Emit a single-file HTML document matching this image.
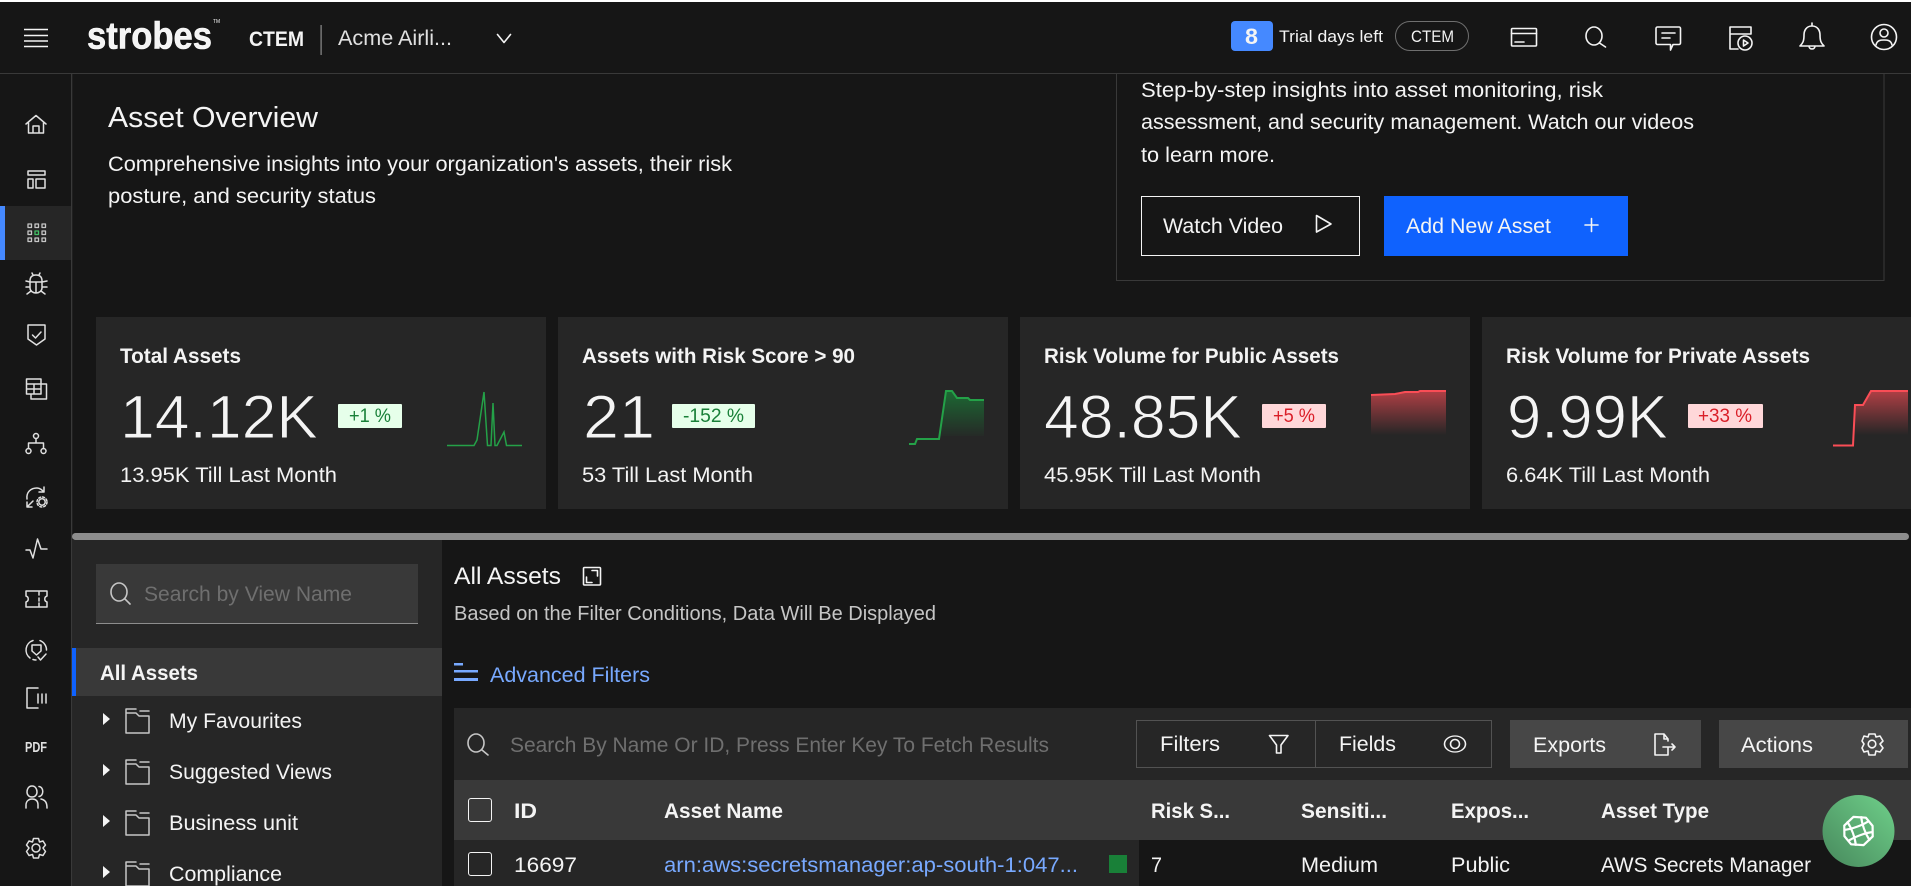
<!DOCTYPE html>
<html lang="en"><head><meta charset="utf-8"><title>Asset Overview</title>
<style>
html,body{margin:0;padding:0;background:#161616;width:1911px;height:886px;overflow:hidden}
svg{display:block}
text{font-family:"Liberation Sans",sans-serif;fill:#f4f4f4;font-size:21px;white-space:pre}
.b{font-weight:700}
.v{font-size:61px;stroke:#262626;stroke-width:1}
.ic{fill:none;stroke:#f4f4f4;stroke-width:1.6;stroke-linecap:round;stroke-linejoin:round}
.si{fill:none;stroke:#e0e0e0;stroke-width:1.5;stroke-linecap:round;stroke-linejoin:round}
</style></head><body>
<svg xmlns="http://www.w3.org/2000/svg" width="1911" height="886" viewBox="0 0 1911 886">
<defs>
<linearGradient id="g" x1="0" y1="0" x2="0" y2="1"><stop offset="0" stop-color="#198038" stop-opacity=".75"/><stop offset="1" stop-color="#198038" stop-opacity="0"/></linearGradient>
<linearGradient id="r" x1="0" y1="0" x2="0" y2="1"><stop offset="0" stop-color="#fa4d56" stop-opacity=".65"/><stop offset="1" stop-color="#fa4d56" stop-opacity="0"/></linearGradient>
<linearGradient id="fab" x1="1" y1="0" x2="0" y2="1"><stop offset="0" stop-color="#6fd08a"/><stop offset="1" stop-color="#47885c"/></linearGradient>
</defs>
<rect width="1911" height="886" fill="#161616"/>
<rect width="1911" height="2" fill="#fff"/>
<rect y="73" width="1911" height="1" fill="#393939"/>

<!-- header -->
<g stroke="#f4f4f4" stroke-width="1.4"><path d="M24 29.5H48M24 35.5H48M24 41H48M24 46.5H48"/></g>
<text x="87" y="48.500" class="b" style="font-size:38px;stroke:#fff;stroke-width:.6" textLength="125" lengthAdjust="spacingAndGlyphs">strobes</text>
<text x="213" y="23" style="font-size:5px" textLength="7" lengthAdjust="spacingAndGlyphs">TM</text>
<text x="249" y="46" class="b" style="font-size:21px" textLength="55" lengthAdjust="spacingAndGlyphs">CTEM</text>
<rect x="320.5" y="25" width="1.2" height="30" fill="#8d8d8d"/>
<text x="338" y="45" style="font-size:21px;fill:#e0e0e0" textLength="114" lengthAdjust="spacingAndGlyphs">Acme Airli...</text>
<path class="ic" d="M497.5 34.5L504 42.5L510.5 34.5"/>

<rect x="1231" y="21" width="42" height="30" rx="4" fill="#4589ff"/>
<text x="1245" y="44" class="b" style="font-size:22px" textLength="13" lengthAdjust="spacingAndGlyphs">8</text>
<text x="1279" y="42" style="font-size:17px" textLength="104" lengthAdjust="spacingAndGlyphs">Trial days left</text>
<rect x="1395.5" y="21.5" width="73" height="29" rx="14.5" fill="none" stroke="#6f6f6f"/>
<text x="1411" y="42" style="font-size:17px" textLength="43" lengthAdjust="spacingAndGlyphs">CTEM</text>

<!-- top icons -->
<g class="ic">
<rect x="1511.5" y="28.5" width="25" height="17.5" rx="1"/><path d="M1511.5 33.5H1536.5M1515 42H1524" stroke-width="1.6"/>
<ellipse cx="1594" cy="36" rx="8" ry="9"/><path d="M1599.5 43L1605.5 47"/>
<path d="M1657.5 27H1679a1.5 1.5 0 0 1 1.5 1.5V43a1.5 1.5 0 0 1-1.5 1.5H1673L1670.5 50V44.5H1657.5a1.5 1.5 0 0 1-1.5-1.5V28.5a1.5 1.5 0 0 1 1.5-1.5zM1662 33H1675M1662 38H1670"/>
<path d="M1730 34V27H1751V34H1730M1730 34V49H1738"/><circle cx="1745" cy="43" r="7"/><path d="M1743.5 40L1748 43L1743.5 46Z"/>
<path d="M1812 23V26M1812 26C1806 26 1804 31 1804 35C1804 41 1803 43 1800 46H1824C1821 43 1820 41 1820 35C1820 31 1818 26 1812 26ZM1809 46C1809 50 1815 50 1815 46"/>
<circle cx="1884" cy="37" r="12.5"/><circle cx="1884" cy="33" r="4"/><path d="M1876 45C1877 40 1881 40 1884 40C1887 40 1891 40 1892 45"/>
</g>

<!-- sidebar -->
<rect x="71" y="74" width="1.3" height="812" fill="#393939"/>
<rect x="0" y="206" width="71" height="54" fill="#262626"/>
<rect x="0" y="206" width="5" height="54" fill="#4589ff"/>
<g class="si">
<path d="M26 124L36 115.500L46 124M28.500 122V133H43.500V122M33 133V126H39V133"/>
<path d="M28 171H45V175H28ZM28 179H33V188H28ZM36 179H45V188H36Z"/>
<g stroke-width="1.3" stroke="#c6c6c6"><rect x="28" y="224" width="3.500" height="3.500"/><rect x="35" y="224" width="3.500" height="3.500"/><rect x="42" y="224" width="3.500" height="3.500"/><rect x="28" y="231" width="3.500" height="3.500"/><rect x="35" y="231" width="3.500" height="3.500" stroke="#42be65"/><rect x="42" y="231" width="3.500" height="3.500"/><rect x="28" y="238" width="3.500" height="3.500"/><rect x="35" y="238" width="3.500" height="3.500"/><rect x="42" y="238" width="3.500" height="3.500"/></g>
<path d="M30 281C30 276 33 275 36 275C39 275 42 276 42 281V288C42 291 39 293 36 293C33 293 30 291 30 288ZM30 282H42M36 282V293M33 275L32 273M39 275L40 273M30 282L26 281M42 282L47 281M30 287H26M42 287H47M31 291L27 294M41 291L45 294"/>
<path d="M28 325H45V339L36.500 345L28 339ZM32.500 335L35.500 338L41 332"/>
<path d="M26.500 379H41V394H26.500ZM26.500 384H41M26.500 389H41M34 384V394M41 384H46.500V399H31V394"/>
<circle cx="36" cy="436" r="2.500"/><circle cx="28.500" cy="451" r="2.500"/><circle cx="43.500" cy="451" r="2.500"/><path d="M36 438.500V443M28.500 448.500V443H43.500V448.500"/>
<path d="M27 499C26 492 31 488 37 488C40 488 42 490 44 492M44 487V492H39M27 507L33 501M27 502V507H32"/><circle cx="42" cy="502" r="3.200"/><circle cx="42" cy="502" r="5" stroke-dasharray="2 2"/>
<path d="M26 550L30 550L33 558L37.500 539L41 549L47 549"/>
<path d="M26 591H47V596C44 597 44 601 47 602V607H26V602C29 601 29 597 26 596ZM39 592V595M39 598V601M39 603V606"/>
<path d="M30 658A10 10 0 0 1 33 640.500M40 640.600A10 10 0 0 1 46.500 650M33 659.500A10 10 0 0 0 36 660M32 645H41V651L36.500 655L32 651ZM38 657L40.500 660L46 654"/>
<path d="M38 688H27V708H38M38 694V703M42 694V703M46 694V703"/>
<path d="M32 786C28 786 27 790 27 792C27 795 29 797 32 797C35 797 37 795 37 792C37 790 36 786 32 786ZM26 808V805C26 801 29 799 32 799C36 799 38 801 38 805V808M39 786.500C44 787 44 796 39 796.500M41 799C45 800 47 802 47 808"/>
<path d="M33.500 838.500H38.500L39.500 842L43 841L45.500 845L43 848L45.500 851.500L43 855.500L39.500 854.500L38.500 858H33.500L32.500 854.500L29 855.500L26.500 851.500L29 848L26.500 845L29 841L32.500 842Z"/><circle cx="36" cy="848" r="4"/>
</g>
<text x="25" y="752" class="b" style="font-size:15px;fill:#e0e0e0" textLength="22" lengthAdjust="spacingAndGlyphs">PDF</text>

<!-- hero -->
<text x="108" y="127" style="font-size:29px" textLength="210" lengthAdjust="spacingAndGlyphs">Asset Overview</text>
<text x="108" y="171" textLength="624" lengthAdjust="spacingAndGlyphs">Comprehensive insights into your organization's assets, their risk</text>
<text x="108" y="203" textLength="268" lengthAdjust="spacingAndGlyphs">posture, and security status</text>

<path d="M1116.500 74V280.500H1884V74" fill="none" stroke="#393939"/>
<text x="1141" y="97" textLength="462" lengthAdjust="spacingAndGlyphs">Step-by-step insights into asset monitoring, risk</text>
<text x="1141" y="129" textLength="553" lengthAdjust="spacingAndGlyphs">assessment, and security management. Watch our videos</text>
<text x="1141" y="162" textLength="134" lengthAdjust="spacingAndGlyphs">to learn more.</text>
<rect x="1141.500" y="196.500" width="218" height="59" fill="none" stroke="#f4f4f4"/>
<text x="1163" y="233" textLength="120" lengthAdjust="spacingAndGlyphs">Watch Video</text>
<path class="ic" d="M1316.500 215.500L1331 224L1316.500 232Z"/>
<rect x="1384" y="196" width="244" height="60" fill="#0f62fe"/>
<text x="1406" y="233" textLength="145" lengthAdjust="spacingAndGlyphs">Add New Asset</text>
<path class="ic" d="M1591.500 218.500V231.500M1585 225H1598"/>

<!-- cards -->
<g fill="#262626"><rect x="96" y="317" width="450" height="192"/><rect x="558" y="317" width="450" height="192"/><rect x="1020" y="317" width="450" height="192"/><rect x="1482" y="317" width="429" height="192"/></g>

<text x="120" y="363" class="b" textLength="121" lengthAdjust="spacingAndGlyphs">Total Assets</text>
<text x="120" y="438" class="v" textLength="198" lengthAdjust="spacingAndGlyphs">14.12K</text>
<rect x="338" y="404" width="64" height="24" rx="1" fill="#e6ffea"/>
<text x="349" y="422" style="font-size:19px;fill:#198038" textLength="42" lengthAdjust="spacingAndGlyphs">+1 %</text>
<text x="120" y="482" textLength="217" lengthAdjust="spacingAndGlyphs">13.95K Till Last Month</text>
<path d="M447 445.500H474L477 440L484 392L487.500 445.500H491L493 403L495 445.500H497L504 432L506.500 445.500H522" fill="none" stroke="#24a148" stroke-width="1.500"/>

<text x="582" y="363" class="b" textLength="273" lengthAdjust="spacingAndGlyphs">Assets with Risk Score &gt; 90</text>
<text x="583" y="438" class="v" textLength="72" lengthAdjust="spacingAndGlyphs">21</text>
<rect x="672" y="404" width="83" height="24" rx="1" fill="#e6ffea"/>
<text x="683" y="422" style="font-size:19px;fill:#198038" textLength="61" lengthAdjust="spacingAndGlyphs">-152 %</text>
<text x="582" y="482" textLength="171" lengthAdjust="spacingAndGlyphs">53 Till Last Month</text>
<path d="M939 439L946 391H952L957 398H968L970 400H984V436H939Z" fill="url(#g)"/>
<path d="M909 444H915L917 439H939L946 391H952L957 398H968L970 400H984" fill="none" stroke="#24a148" stroke-width="2"/>

<text x="1044" y="363" class="b" textLength="295" lengthAdjust="spacingAndGlyphs">Risk Volume for Public Assets</text>
<text x="1044" y="438" class="v" textLength="198" lengthAdjust="spacingAndGlyphs">48.85K</text>
<rect x="1262" y="404" width="64" height="24" rx="1" fill="#ffd7d9"/>
<text x="1273" y="422" style="font-size:19px;fill:#da1e28" textLength="42" lengthAdjust="spacingAndGlyphs">+5 %</text>
<text x="1044" y="482" textLength="217" lengthAdjust="spacingAndGlyphs">45.95K Till Last Month</text>
<path d="M1371 395L1395 394L1405 392H1418L1420 391H1446V435H1371Z" fill="url(#r)"/>
<path d="M1371 395L1395 394L1405 392H1418L1420 391H1446" fill="none" stroke="#fa4d56" stroke-width="2"/>

<text x="1506" y="363" class="b" textLength="304" lengthAdjust="spacingAndGlyphs">Risk Volume for Private Assets</text>
<text x="1507" y="438" class="v" textLength="161" lengthAdjust="spacingAndGlyphs">9.99K</text>
<rect x="1688" y="404" width="75" height="24" rx="1" fill="#ffd7d9"/>
<text x="1698" y="422" style="font-size:19px;fill:#da1e28" textLength="54" lengthAdjust="spacingAndGlyphs">+33 %</text>
<text x="1506" y="482" textLength="204" lengthAdjust="spacingAndGlyphs">6.64K Till Last Month</text>
<path d="M1854 405H1863L1871 391H1908V435H1854Z" fill="url(#r)"/>
<path d="M1833 445.500H1853L1855 405H1863L1871 391H1908" fill="none" stroke="#fa4d56" stroke-width="2"/>

<!-- splitter -->
<rect x="72" y="533" width="1837" height="7" rx="3.500" fill="#8d8d8d"/>

<!-- left panel -->
<rect x="72.300" y="540" width="369.700" height="346" fill="#262626"/>
<rect x="96" y="564" width="322" height="59" fill="#393939"/>
<rect x="96" y="623" width="322" height="1" fill="#8d8d8d"/>
<ellipse cx="119" cy="592" rx="8" ry="9" class="ic" style="stroke:#c6c6c6"/><path class="ic" d="M125 599L130 604" style="stroke:#c6c6c6"/>
<text x="144" y="601" style="fill:#6f6f6f" textLength="208" lengthAdjust="spacingAndGlyphs">Search by View Name</text>
<rect x="72.300" y="648" width="369.700" height="48" fill="#393939"/>
<rect x="72" y="648" width="4" height="48" fill="#0f62fe"/>
<text x="100" y="680" class="b" textLength="98" lengthAdjust="spacingAndGlyphs">All Assets</text>
<g fill="#f4f4f4"><path d="M103 713L110 719L103 725Z"/><path d="M103 764L110 770L103 776Z"/><path d="M103 815L110 821L103 827Z"/><path d="M103 866L110 872L103 878Z"/></g>
<g class="si" style="stroke:#c6c6c6"><path d="M126 709H136M126 709V733H149V716H139L136 713H126M140 711H149"/><path d="M126 760H136M126 760V784H149V767H139L136 764H126M140 762H149"/><path d="M126 811H136M126 811V835H149V818H139L136 815H126M140 813H149"/><path d="M126 862H136M126 862V886H149V869H139L136 866H126M140 864H149"/></g>
<text x="169" y="728" textLength="133" lengthAdjust="spacingAndGlyphs">My Favourites</text>
<text x="169" y="779" textLength="163" lengthAdjust="spacingAndGlyphs">Suggested Views</text>
<text x="169" y="830" textLength="129" lengthAdjust="spacingAndGlyphs">Business unit</text>
<text x="169" y="881" textLength="113" lengthAdjust="spacingAndGlyphs">Compliance</text>

<!-- right section -->
<text x="454" y="584" style="font-size:24px" textLength="107" lengthAdjust="spacingAndGlyphs">All Assets</text>
<rect x="583.500" y="567.500" width="17" height="17.500" class="ic" rx="1"/><path class="ic" stroke-width="1.200" d="M592 570.500H597.500V576M586.500 577V582.500H592"/>
<text x="454" y="620" style="font-size:20px;fill:#c6c6c6" textLength="482" lengthAdjust="spacingAndGlyphs">Based on the Filter Conditions, Data Will Be Displayed</text>
<g fill="#78a9ff"><rect x="454" y="663" width="9" height="2.500"/><rect x="454" y="670" width="24" height="2.500"/><rect x="454" y="678" width="24" height="3"/></g>
<text x="490" y="682" style="fill:#78a9ff" textLength="160" lengthAdjust="spacingAndGlyphs">Advanced Filters</text>

<rect x="454" y="708" width="1457" height="72" fill="#262626"/>
<ellipse cx="476" cy="743" rx="8" ry="9" class="ic" style="stroke:#c6c6c6"/><path class="ic" d="M482 750L488 755" style="stroke:#c6c6c6"/>
<text x="510" y="752" style="fill:#6f6f6f" textLength="539" lengthAdjust="spacingAndGlyphs">Search By Name Or ID, Press Enter Key To Fetch Results</text>
<rect x="1136.500" y="720.500" width="355" height="47" fill="none" stroke="#525252"/>
<rect x="1315" y="720" width="1" height="48" fill="#525252"/>
<text x="1160" y="751" textLength="60" lengthAdjust="spacingAndGlyphs">Filters</text>
<path class="ic" d="M1269.500 735.500H1288L1281 745V753H1276.500V745Z"/>
<text x="1339" y="751" textLength="57" lengthAdjust="spacingAndGlyphs">Fields</text>
<circle cx="1455" cy="744" r="10.500" class="ic" transform="translate(1455 744) scale(1 .76) translate(-1455 -744)"/><circle cx="1455" cy="744" r="4.500" class="ic"/>
<rect x="1510" y="720" width="191" height="48" fill="#474747"/>
<text x="1533" y="752" textLength="73" lengthAdjust="spacingAndGlyphs">Exports</text>
<path class="ic" d="M1668 747V755H1655V734H1664L1668 739V741M1664 734V739H1668M1663 747H1675M1672 744L1675 747L1672 750"/>
<rect x="1719" y="720" width="189" height="48" fill="#474747"/>
<text x="1741" y="752" textLength="72" lengthAdjust="spacingAndGlyphs">Actions</text>
<path class="ic" d="M1869 734H1875L1876 737L1880 736L1883 741L1880 744L1883 748L1880 752L1876 751L1875 755H1869L1868 751L1864 752L1862 748L1864 744L1862 741L1864 736L1868 737Z"/><circle cx="1872" cy="744" r="3.800" class="ic"/>

<!-- table -->
<rect x="454" y="780" width="1457" height="60" fill="#393939"/>
<rect x="454" y="840" width="685" height="46" fill="#262626"/>
<rect x="468.500" y="798.500" width="23" height="23" rx="2.500" fill="none" stroke="#f4f4f4"/>
<rect x="468.500" y="852.500" width="23" height="23" rx="2.500" fill="none" stroke="#f4f4f4"/>
<text x="514" y="818" class="b" textLength="23" lengthAdjust="spacingAndGlyphs">ID</text>
<text x="664" y="818" class="b" textLength="119" lengthAdjust="spacingAndGlyphs">Asset Name</text>
<text x="1151" y="818" class="b" textLength="79" lengthAdjust="spacingAndGlyphs">Risk S...</text>
<text x="1301" y="818" class="b" textLength="86" lengthAdjust="spacingAndGlyphs">Sensiti...</text>
<text x="1451" y="818" class="b" textLength="78" lengthAdjust="spacingAndGlyphs">Expos...</text>
<text x="1601" y="818" class="b" textLength="108" lengthAdjust="spacingAndGlyphs">Asset Type</text>
<text x="514" y="872" textLength="63" lengthAdjust="spacingAndGlyphs">16697</text>
<text x="664" y="872" style="fill:#78a9ff" textLength="414" lengthAdjust="spacingAndGlyphs">arn:aws:secretsmanager:ap-south-1:047...</text>
<rect x="1109" y="855" width="18" height="18" fill="#198038"/>
<text x="1151" y="872" textLength="11" lengthAdjust="spacingAndGlyphs">7</text>
<text x="1301" y="872" textLength="77" lengthAdjust="spacingAndGlyphs">Medium</text>
<text x="1451" y="872" textLength="59" lengthAdjust="spacingAndGlyphs">Public</text>
<text x="1601" y="872" textLength="210" lengthAdjust="spacingAndGlyphs">AWS Secrets Manager</text>

<!-- fab -->
<circle cx="1858.500" cy="831" r="36" fill="url(#fab)"/>
<g fill="none" stroke="#fff" stroke-width="2.200" stroke-linejoin="round" transform="rotate(-20 1858.500 831)"><path d="M1858.500 816L1870 821L1873.500 831L1870 841L1858.500 846L1847 841L1843.500 831L1847 821Z"/><path d="M1851 818C1853 826 1853 836 1851 844M1866 818C1864 826 1864 836 1866 844M1845 825C1852 827 1865 827 1872 825M1845 837C1852 835 1865 835 1872 837"/></g>
</svg>
</body></html>
